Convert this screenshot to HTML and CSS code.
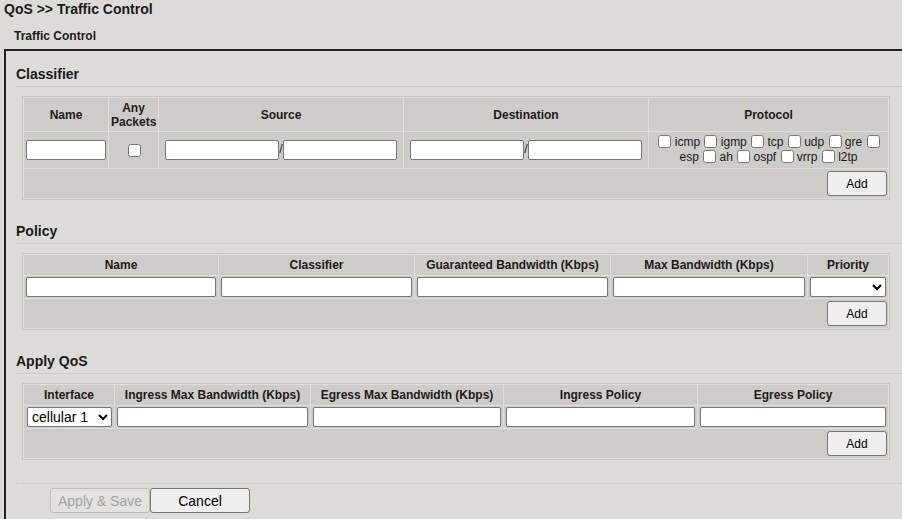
FILE: index.html
```html
<!DOCTYPE html>
<html lang="en">
<head>
  <meta charset="UTF-8" />
  <title>QoS - Traffic Control</title>
  <link rel="stylesheet" href="styles.css">
</head>
<body>
  <h1 class="page-title">QoS &gt;&gt; Traffic Control</h1>
  <div class="tab">Traffic Control</div>

  <div class="panel">
    <!-- Classifier -->
    <h3 class="section-title">Classifier</h3>
    <table class="grid">
      <colgroup>
        <col style="width:84px"><col style="width:49px"><col style="width:244px"><col style="width:244px"><col>
      </colgroup>
      <tr>
        <th>Name</th>
        <th class="two-line">Any<br>Packets</th>
        <th>Source</th>
        <th>Destination</th>
        <th>Protocol</th>
      </tr>
      <tr class="row-tall">
        <td><input type="text" class="field"></td>
        <td class="center"><input type="checkbox"></td>
        <td class="center"><input type="text" class="field half">/<input type="text" class="field half"></td>
        <td class="center"><input type="text" class="field half">/<input type="text" class="field half"></td>
        <td class="center protocols">
          <input type="checkbox"> icmp <input type="checkbox"> igmp <input type="checkbox"> tcp <input type="checkbox"> udp <input type="checkbox"> gre <input type="checkbox"> esp <input type="checkbox"> ah <input type="checkbox"> ospf <input type="checkbox"> vrrp <input type="checkbox"> l2tp
        </td>
      </tr>
      <tr>
        <td colspan="5" class="actions"><button class="btn-add">Add</button></td>
      </tr>
    </table>

    <!-- Policy -->
    <h3 class="section-title">Policy</h3>
    <table class="grid">
      <colgroup>
        <col style="width:194px"><col style="width:195px"><col style="width:195px"><col style="width:196px"><col>
      </colgroup>
      <tr>
        <th>Name</th>
        <th>Classifier</th>
        <th>Guaranteed Bandwidth (Kbps)</th>
        <th>Max Bandwidth (Kbps)</th>
        <th>Priority</th>
      </tr>
      <tr>
        <td><input type="text" class="field"></td>
        <td><input type="text" class="field"></td>
        <td><input type="text" class="field"></td>
        <td><input type="text" class="field"></td>
        <td><select class="pick"><option></option></select></td>
      </tr>
      <tr>
        <td colspan="5" class="actions"><button class="btn-add">Add</button></td>
      </tr>
    </table>

    <!-- Apply QoS -->
    <h3 class="section-title">Apply QoS</h3>
    <table class="grid">
      <colgroup>
        <col style="width:90px"><col style="width:195px"><col style="width:192px"><col style="width:193px"><col>
      </colgroup>
      <tr>
        <th>Interface</th>
        <th>Ingress Max Bandwidth (Kbps)</th>
        <th>Egress Max Bandwidth (Kbps)</th>
        <th>Ingress Policy</th>
        <th>Egress Policy</th>
      </tr>
      <tr>
        <td><select class="pick iface"><option>cellular 1</option></select></td>
        <td><input type="text" class="field"></td>
        <td><input type="text" class="field"></td>
        <td><input type="text" class="field"></td>
        <td><input type="text" class="field"></td>
      </tr>
      <tr>
        <td colspan="5" class="actions"><button class="btn-add">Add</button></td>
      </tr>
    </table>

    <div class="footer">
      <button class="btn" disabled>Apply &amp; Save</button><button class="btn">Cancel</button>
    </div>
  </div>
</body>
</html>
```

FILE: styles.css
```css
body {
  background-color: #dcdbd7;
  color: #1a1a1a;
  font-family: 'Liberation Sans', Arial, sans-serif;
  font-size: 12px;
  margin: 0;
  padding: 0;
  overflow: hidden;
}

.page-title {
  font-size: 14px;
  line-height: 16px;
  font-weight: bold;
  margin: 0;
  padding: 1px 0 0 4px;
}

.tab {
  font-weight: bold;
  font-size: 12px;
  line-height: 14px;
  margin-top: 12px;
  padding-left: 14px;
}

.panel {
  margin: 6px 0 0 4px;
  border-left: 2px solid #222;
  border-top: 2px solid #222;
  padding: 15px 0 0 10px;
  width: 886px;
  height: 460px;
  overflow: hidden;
}

.section-title {
  font-size: 14px;
  line-height: 16px;
  font-weight: bold;
  margin: 0;
  padding-bottom: 4px;
  border-bottom: 1px solid #cbcac6;
}

.grid {
  width: 868px;
  margin: 9px 0 23px 6px;
  table-layout: fixed;
  border: 1px solid #c6c5c1;
  border-spacing: 1px;
  background-color: #dfdedb;
}

.grid th,
.grid td {
  background-color: #cdccc8;
  padding: 1px 2px;
}

.grid th {
  font-weight: bold;
  line-height: 15px;
  padding: 3px 2px 2px;
  color: #221a1a;
}

.grid th.two-line {
  line-height: 14px;
}

.row-tall td {
  height: 36px;
  padding: 0 2px;
}

.center {
  text-align: center;
}

.field {
  display: block;
  box-sizing: border-box;
  width: 100%;
  height: 20px;
  margin: 0;
  border: 1px solid #767676;
  border-radius: 2px;
  background: #fff;
  font-size: 13px;
}

.field.half {
  display: inline-block;
  width: 114px;
  vertical-align: middle;
}

.grid input[type="checkbox"] {
  width: 13px;
  height: 13px;
  vertical-align: -2px;
}

.protocols {
  line-height: 15px;
  font-size: 12px;
}

.protocols input[type="checkbox"] {
  margin: 0 0 1px 1px;
}

.pick {
  display: block;
  box-sizing: border-box;
  width: 100%;
  height: 20px;
  margin: 0;
  border: 1px solid #767676;
  border-radius: 2px;
  background: #fff;
  font-size: 14px;
  font-family: 'Liberation Sans', Arial, sans-serif;
}

.pick.iface {
  width: 85px;
  margin-left: 1px;
  padding: 0;
}

.grid td.actions {
  text-align: right;
  padding: 2px 1px 2px 2px;
  line-height: 12px;
}

.btn-add {
  display: inline-block;
  width: 60px;
  height: 25px;
  background-color: #efefef;
  border: 1px solid #767676;
  border-radius: 3px;
  font-family: 'Liberation Sans', Arial, sans-serif;
  font-size: 12px;
  color: #000;
  margin: 0;
  vertical-align: top;
}

.footer {
  margin-top: 1px;
  border-top: 1px dotted #c4c3bf;
  padding: 4px 0 0 34px;
}

.btn {
  width: 100px;
  height: 25px;
  background-color: #efefef;
  border: 1px solid #767676;
  border-radius: 3px;
  font-family: 'Liberation Sans', Arial, sans-serif;
  font-size: 14px;
  color: #000;
  margin: 0;
}

.btn:disabled {
  background-color: #e3e2df;
  border-color: #bdbcb9;
  color: #a3a3a3;
}
```
